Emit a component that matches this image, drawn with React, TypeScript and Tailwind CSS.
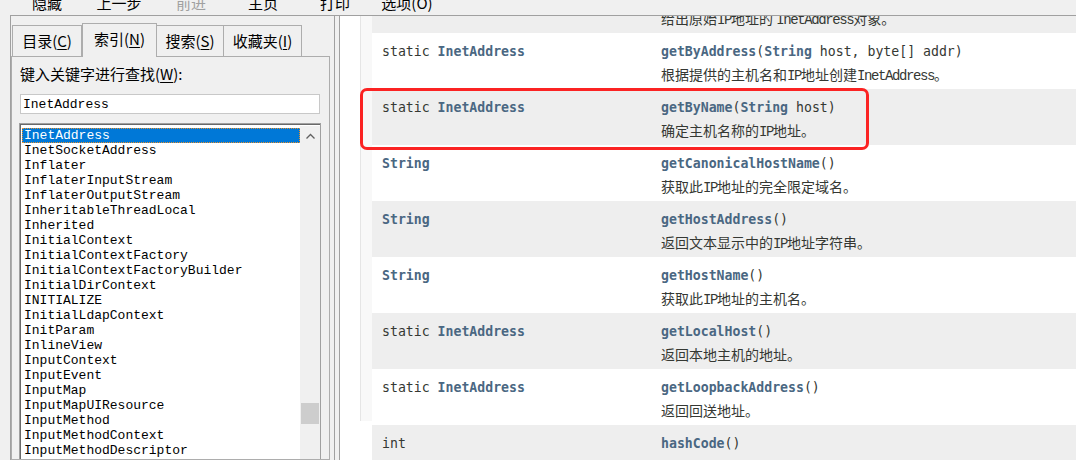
import React from "react"

const tools = [
    { label: "隐藏", off: false },
    { label: "上一步", off: false },
    { label: "前进", off: true },
    { label: "主页", off: false },
    { label: "打印", off: false },
    { label: "选项(O)", off: false },
]

const entries = [
    "InetAddress",
    "InetSocketAddress",
    "Inflater",
    "InflaterInputStream",
    "InflaterOutputStream",
    "InheritableThreadLocal",
    "Inherited",
    "InitialContext",
    "InitialContextFactory",
    "InitialContextFactoryBuilder",
    "InitialDirContext",
    "INITIALIZE",
    "InitialLdapContext",
    "InitParam",
    "InlineView",
    "InputContext",
    "InputEvent",
    "InputMap",
    "InputMapUIResource",
    "InputMethod",
    "InputMethodContext",
    "InputMethodDescriptor",
    "InputMethodEvent",
]

// text parts: [text, isLink]
type Part = [string, boolean]

const rows: { type: Part[]; sig: Part[]; desc: string }[] = [
    {
        type: [["static ", false], ["InetAddress", true]],
        sig: [["getByAddress", true], ["(byte[] addr)", false]],
        desc: "给出原始IP地址的 InetAddress对象。",
    },
    {
        type: [["static ", false], ["InetAddress", true]],
        sig: [["getByAddress", true], ["(", false], ["String", true], [" host, byte[] addr)", false]],
        desc: "根据提供的主机名和IP地址创建InetAddress。",
    },
    {
        type: [["static ", false], ["InetAddress", true]],
        sig: [["getByName", true], ["(", false], ["String", true], [" host)", false]],
        desc: "确定主机名称的IP地址。",
    },
    {
        type: [["String", true]],
        sig: [["getCanonicalHostName", true], ["()", false]],
        desc: "获取此IP地址的完全限定域名。",
    },
    {
        type: [["String", true]],
        sig: [["getHostAddress", true], ["()", false]],
        desc: "返回文本显示中的IP地址字符串。",
    },
    {
        type: [["String", true]],
        sig: [["getHostName", true], ["()", false]],
        desc: "获取此IP地址的主机名。",
    },
    {
        type: [["static ", false], ["InetAddress", true]],
        sig: [["getLocalHost", true], ["()", false]],
        desc: "返回本地主机的地址。",
    },
    {
        type: [["static ", false], ["InetAddress", true]],
        sig: [["getLoopbackAddress", true], ["()", false]],
        desc: "返回回送地址。",
    },
    {
        type: [["int", false]],
        sig: [["hashCode", true], ["()", false]],
        desc: "返回此IP地址的哈希码。",
    },
]

function Code({ parts }: { parts: Part[] }) {
    return (
        <div className="font-['DejaVu_Sans_Mono',monospace] text-[13.2px] leading-[18px] whitespace-pre text-[#353833]">
            {parts.map(([t, link], i) =>
                link ? (
                    <span key={i} className="font-bold text-[#4a6782]">{t}</span>
                ) : (
                    <span key={i}>{t}</span>
                )
            )}
        </div>
    )
}

function Desc({ text }: { text: string }) {
    // latin words render in a narrow serif mono like the help viewer does
    const bits = text.split(/([A-Za-z]+)/)
    return (
        <div className="mt-[3px] font-['Noto_Sans_CJK_SC',sans-serif] text-[14px] leading-[20px] whitespace-pre text-[#353833]">
            {bits.map((b, i) =>
                /^[A-Za-z]+$/.test(b) ? (
                    <span key={i} className="font-['Liberation_Mono',monospace] tracking-[-1.4px]">{b}</span>
                ) : (
                    <span key={i}>{b}</span>
                )
            )}
        </div>
    )
}

function Tab({ label, keyChar, w, active }: { label: string; keyChar: string; w: string; active?: boolean }) {
    return (
        <div
            className={
                active
                    ? `${w} h-[34px] -mb-[1px] relative z-10 bg-[#f0f0f0] border border-b-0 border-[#adadad] flex items-start justify-center pt-[5px]`
                    : `${w} h-[31px] bg-[#f0f0f0] border border-b-0 border-[#adadad] -ml-[1px] flex items-start justify-center pt-[5px]`
            }
        >
            <span className="text-[15px] leading-[20px] text-black">
                {label}(<span className="underline underline-offset-2">{keyChar}</span>)
            </span>
        </div>
    )
}

export default function App() {
    return (
        <div className="relative w-[1076px] h-[460px] overflow-hidden bg-[#f0f0f0] flex flex-col font-['Noto_Sans_CJK_SC',sans-serif]">
            {/* toolbar, mostly scrolled out of view */}
            <div className="h-[15px] shrink-0 overflow-hidden flex pl-[11px]">
                {tools.map((t) => (
                    <div
                        key={t.label}
                        className={`w-[72px] -mt-[7px] text-center text-[15px] leading-[20px] ${t.off ? "text-[#a0a0a0]" : "text-black"}`}
                    >
                        {t.label}
                    </div>
                ))}
            </div>

            <div className="flex-1 flex min-h-0">
                <div className="w-[10px] shrink-0" />
                <div className="flex-1 flex border-l border-t border-[#a0a0a0] min-h-0">
                    {/* left: index pane */}
                    <div className="w-[319px] shrink-0 flex flex-col pt-[7px]">
                        <div className="h-[33px] flex items-end pl-[2px] shrink-0">
                            <Tab label="目录" keyChar="C" w="w-[70px]" />
                            <Tab label="索引" keyChar="N" w="w-[75px]" active />
                            <Tab label="搜索" keyChar="S" w="w-[68px]" />
                            <Tab label="收藏夹" keyChar="I" w="w-[79px]" />
                        </div>
                        <div className="flex-1 border border-[#adadad] pl-[8px] pt-[7px] overflow-hidden">
                            <div className="text-[15px] leading-[20px] text-black">
                                键入关键字进行查找(<span className="underline underline-offset-2">W</span>):
                            </div>
                            <div className="mt-[10px] w-[300px] h-[20px] bg-white border border-[#c8c8c8] flex items-center pl-[2px] pt-[2px]">
                                <span className="font-['Liberation_Mono',monospace] text-[13px] leading-[16px] text-black">InetAddress</span>
                            </div>
                            <div className="mt-[9px] -ml-[1px] w-[302px] h-[400px] bg-white border border-[#a0a0a0] shadow-[inset_1px_1px_0_#696969] flex pt-[4px] pl-[2px]">
                                <div className="flex-1 flex flex-col">
                                    {entries.map((e, i) => (
                                        <div
                                            key={e}
                                            className={
                                                i === 0
                                                    ? "h-[15px] pl-[2px] bg-[#0078d7] text-white outline-1 outline-dotted -outline-offset-1 outline-[#e8902a] font-['Liberation_Mono',monospace] text-[13px] leading-[16px]"
                                                    : "h-[15px] pl-[2px] text-black font-['Liberation_Mono',monospace] text-[13px] leading-[16px]"
                                            }
                                        >
                                            {e}
                                        </div>
                                    ))}
                                </div>
                                <div className="w-[20px] -mt-[2px] bg-[#f0f0f0] flex flex-col items-center shrink-0">
                                    <svg width="17" height="17" viewBox="0 0 17 17" className="mt-[2px]">
                                        <path d="M4.5 10.5 L8.5 6.5 L12.5 10.5" fill="none" stroke="#606060" strokeWidth="1.3" />
                                    </svg>
                                    <div className="mt-[258px] w-[18px] h-[21px] bg-[#cdcdcd]" />
                                </div>
                            </div>
                        </div>
                    </div>

                    {/* splitter */}
                    <div className="w-[5px] shrink-0 border-r border-[#a0a0a0]" />
                    <div className="w-[4px] shrink-0" />

                    {/* right: doc page */}
                    <div className="flex-1 bg-white border-l border-[#a0a0a0] pl-[20px] overflow-hidden">
                        <div className="h-full border-l border-[#e5e5e5] bg-[#f8f8f8] pl-[11px]">
                            <div className="-mt-[39px] bg-white">
                                {rows.map((r, i) => (
                                    <div
                                        key={i}
                                        className={`h-[56px] flex ${i % 2 === 0 ? "bg-[#eeeeee]" : "bg-white"}`}
                                    >
                                        <div className="w-[279px] shrink-0 pl-[10px] pt-[10px]">
                                            <Code parts={r.type} />
                                        </div>
                                        <div className="flex-1 pl-[10px] pt-[10px]">
                                            <Code parts={r.sig} />
                                            <Desc text={r.desc} />
                                        </div>
                                    </div>
                                ))}
                            </div>
                        </div>
                    </div>
                </div>
            </div>

            {/* red annotation around getByName */}
            <div className="absolute left-[360px] top-[88px] w-[509px] h-[62px] border-[3px] border-[#fb2323] rounded-[7px] pointer-events-none" />
        </div>
    )
}
